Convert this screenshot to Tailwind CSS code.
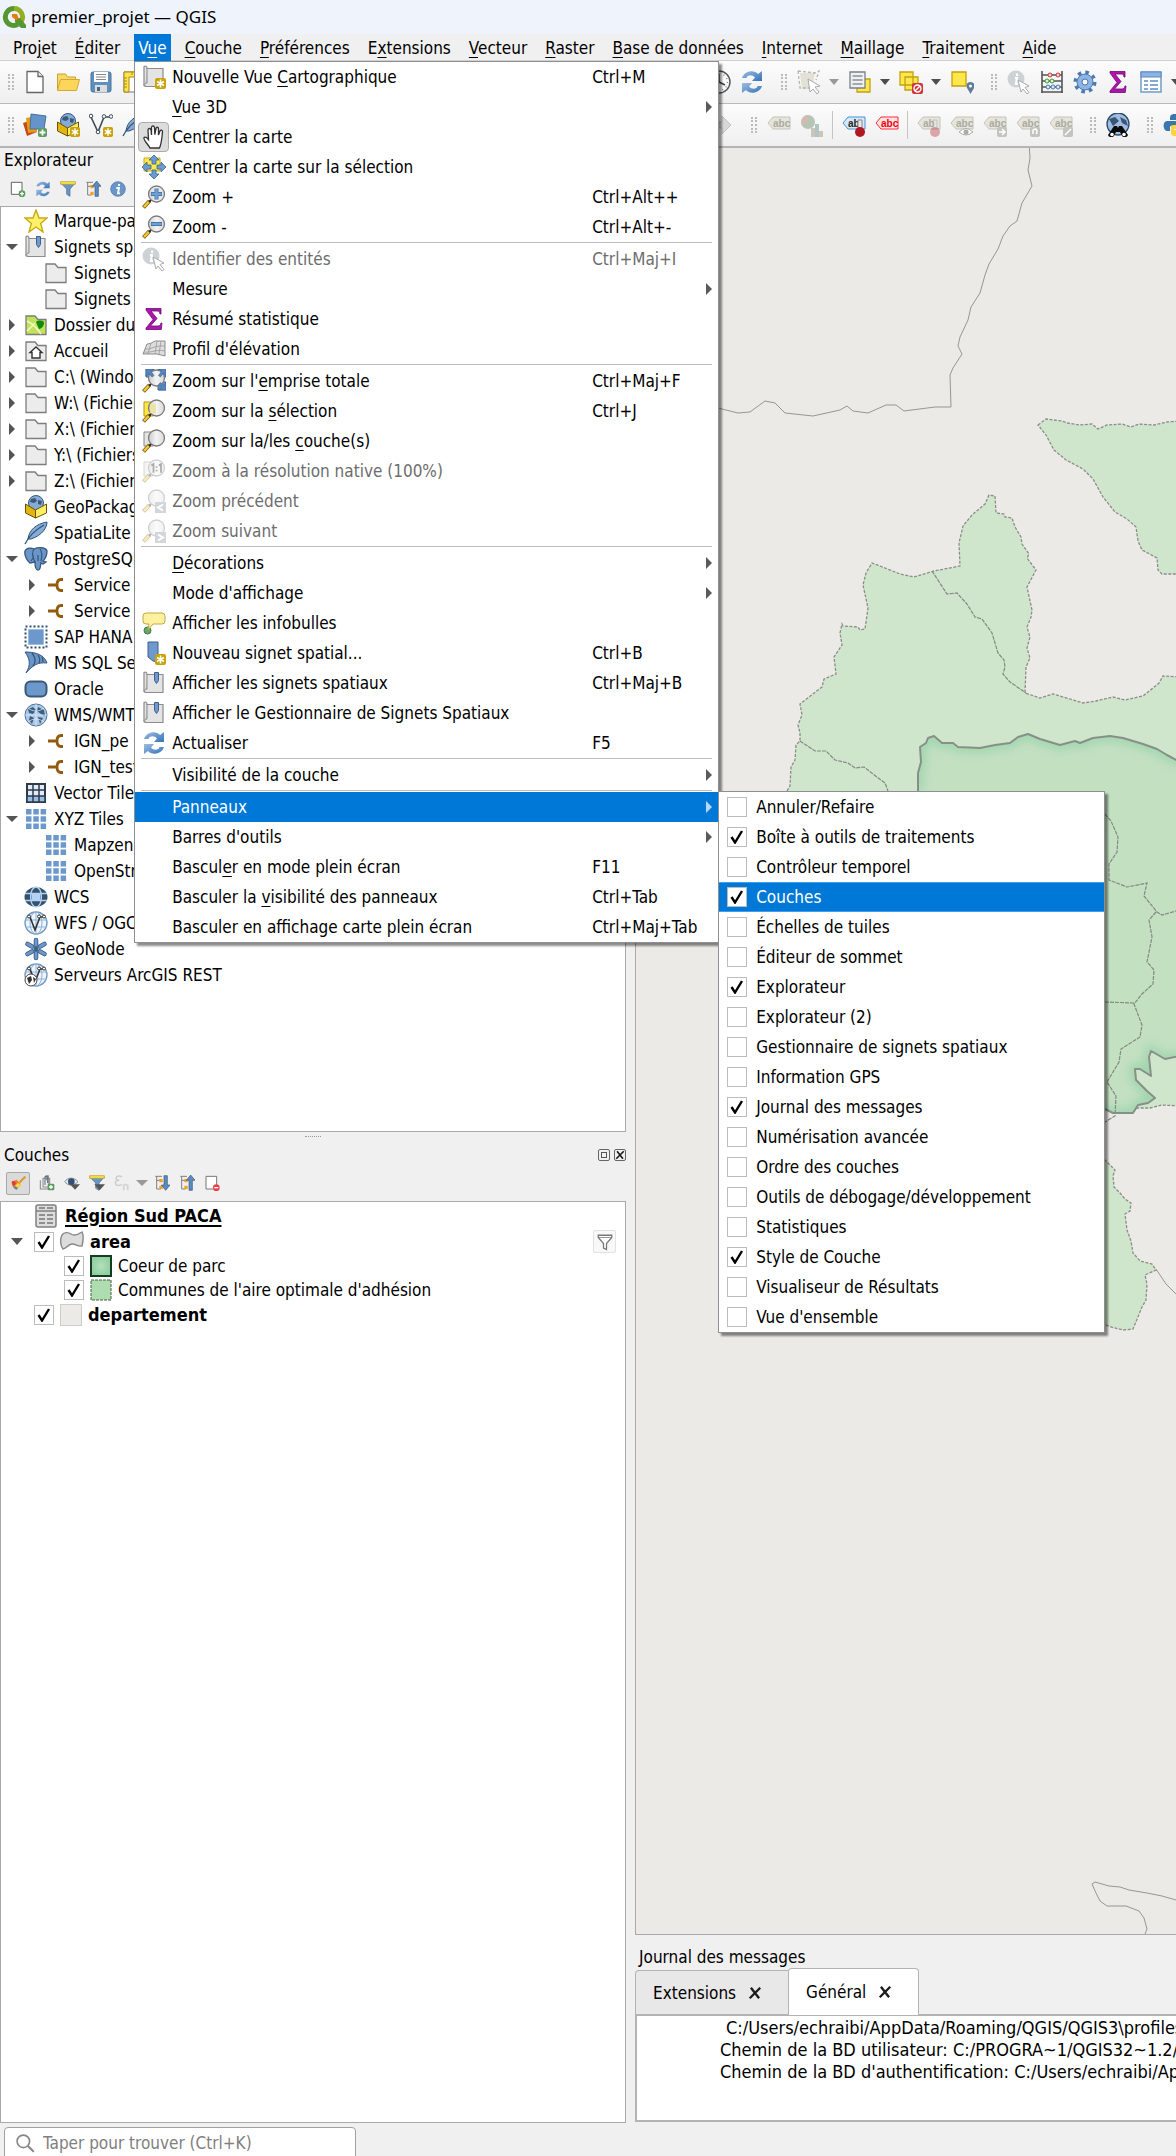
<!DOCTYPE html>
<html lang="fr">
<head>
<meta charset="utf-8">
<meta name="viewport" content="width=device-width, initial-scale=1">
<title>premier_projet — QGIS</title>
<script src="https://cdn.jsdelivr.net/npm/@tailwindcss/browser@4"></script>
</head>
<body class="flex min-h-screen flex-col overflow-x-hidden bg-[#f0f0f0] font-['DejaVu_Sans_Condensed','DejaVu_Sans',sans-serif] text-[17px] leading-[26px] text-black">

<svg class="absolute size-0" aria-hidden="true">
  <defs>
    <linearGradient id="lens" x1="0" y1="0" x2="1" y2="0"><stop offset="0" stop-color="#ccc"/><stop offset=".5" stop-color="#f4f4f4"/><stop offset="1" stop-color="#d8d8d8"/></linearGradient>
    <linearGradient id="blue" x1="0" y1="0" x2="1" y2="1"><stop offset="0" stop-color="#9dbde2"/><stop offset="1" stop-color="#3573b8"/></linearGradient>
    <symbol id="badge" viewBox="0 0 11 11"><rect width="11" height="11" rx="2" fill="#c8a30b"/><path d="M5.500 1.500v8M2 3.500l7 4M9 3.500l-7 4" stroke="#fff" stroke-width="1.600"/></symbol>
    <symbol id="lensbase" viewBox="0 0 24 24"><path d="M1.500 22.500l6-6.500" stroke="#7a5a10" stroke-width="4"/><path d="M2 22l5-5.500" stroke="#f0c838" stroke-width="2.600"/><path d="M7 17l3-3" stroke="#222" stroke-width="2"/><circle cx="14.500" cy="9" r="8" fill="url(#lens)" stroke="#7b7b7b" stroke-width="1.300"/></symbol>
  </defs>
  <symbol id="qgis" viewBox="0 0 24 24"><path d="M12 3.500a8.500 8.500 0 1 0 4 15.900" fill="none" stroke="#589632" stroke-width="5"/><path d="M12 3.500a8.500 8.500 0 0 1 7.200 13" fill="none" stroke="#93b023" stroke-width="5"/><path d="M13 13h5l6 7v3h-5l-6-6z" fill="#589632"/><path d="M10 9h5l2 5-3 1-4-3z" fill="#ee7913"/></symbol>
  <symbol id="doc" viewBox="0 0 24 24"><path d="M4 1.500h11l5 5v16H4z" fill="#fff" stroke="#666" stroke-width="1.300"/><path d="M15 1.500v5h5" fill="#eee" stroke="#666" stroke-width="1.300"/></symbol>
  <symbol id="open" viewBox="0 0 24 24"><path d="M1.500 20V4h8l2 3h8v4" fill="#f7d96a" stroke="#c9a227"/><path d="M1.500 20.500l3-11h19l-3 11z" fill="#fbd65a" stroke="#d2a92c"/></symbol>
  <symbol id="save" viewBox="0 0 24 24"><rect x="2" y="2" width="20" height="20" rx="2" fill="#5f8fc0" stroke="#4f7399"/><path d="M5 2h14v10H5z" fill="#fff"/><path d="M7 4.500h10M7 7h10M7 9.500h10" stroke="#888" stroke-width="1.200"/><path d="M6 15h12v7H6z" fill="#dcdcdc"/><path d="M8 17h3v4H8z" fill="#48688a"/></symbol>
  <symbol id="layout" viewBox="0 0 24 24"><path d="M2 2h20v20H2z" fill="#fff" stroke="#777"/><path d="M2 2h20v5H7v15H2z" fill="#ffe34d" stroke="#a98a12"/><path d="M5 8h-3M5 11H2M5 14H2M5 17H2M10 2v3M14 2v3" stroke="#a98a12"/></symbol>
  <symbol id="ds" viewBox="0 0 24 24"><path d="M0 10l9-3 5 12-10 4z" fill="#c4471c"/><path d="M3 5l11-2v16l-9 1z" fill="#e79a13"/><path d="M8 1l15 2-2 13H7z" fill="#6494c9" stroke="#4a7099"/><rect x="15" y="15" width="9" height="9" rx="2" fill="#5f9b62"/><path d="M19.500 16.500v6M16.500 19.500h6" stroke="#fff" stroke-width="1.800"/></symbol>
  <symbol id="gpkg" viewBox="0 0 24 24"><circle cx="12" cy="8" r="7.500" fill="#86abd5" stroke="#33587e"/><path d="M7 4l4-1 2 3-3 2-4-1zM14 5l4 1-1 4-3-1z" fill="#3b5878"/><path d="M1.500 9l10 6v8l-10-5z" fill="#e0b50e" stroke="#6d5300"/><path d="M22.500 9l-11 6v8l11-5z" fill="#ffee63" stroke="#6d5300"/></symbol>
  <symbol id="gpkgnew" viewBox="0 0 24 24"><use href="#gpkg"/><use href="#badge" x="14" y="14" width="10" height="10"/></symbol>
  <symbol id="vnew" viewBox="0 0 24 24"><path d="M2 4l7 15 6-15h7" fill="none" stroke="#3c4c58" stroke-width="1.600"/><g fill="#fff" stroke="#3c4c58"><circle cx="2" cy="3" r="1.800"/><circle cx="15" cy="3.500" r="1.800"/><circle cx="22" cy="3.500" r="1.800"/><circle cx="9" cy="19" r="1.800"/></g><use href="#badge" x="14" y="14" width="10" height="10"/></symbol>
  <symbol id="feather" viewBox="0 0 24 24"><path d="M4 18C5 9 12 3 23 1c0 5-4 13-16 17z" fill="#86acd6" stroke="#2f5479"/><path d="M1 23C5 15 11 9 20 4" fill="none" stroke="#2f5479" stroke-width="1.300"/></symbol>
  <symbol id="map" viewBox="0 0 24 24"><path d="M2 1.500c2-1 3 0 3 2h16v18H4c-2 0-2.500-1-2-3z" fill="#e4e4e4" stroke="#8c8c8c" stroke-width="1.200"/><path d="M5 3v15c-2 0-3 1-2 3" fill="#cfcfcf" stroke="#8c8c8c"/></symbol>
  <symbol id="mapnew" viewBox="0 0 24 24"><use href="#map"/><use href="#badge" x="13" y="13" width="11" height="11"/></symbol>
  <symbol id="book" viewBox="0 0 24 24"><use href="#map"/><path d="M12.500 1.500h4v8l-2 3-2-3z" fill="#6f98cc" stroke="#3d618c"/></symbol>
  <symbol id="hand" viewBox="0 0 24 24"><path d="M8 23C6 19 1 15 2 12.500c1-1 3 0 4.500 2L6 5c0-2 2.500-2 3 0l.5 5V2.500c0-2 2.700-2 3 0l.3 7L14 3.500c.5-2 2.500-1.500 2.500.5v6l1.500-4c.7-1.500 2.500-1 2.500.7-.5 6-1 12-3 16.300z" fill="#fff" stroke="#333" stroke-width="1.300"/></symbol>
  <symbol id="pansel" viewBox="0 0 24 24"><path d="M2 3h16v13H2z" fill="#fce94a" stroke="#c9a80c"/><path d="M12 0l5 5h-3v4h-4V5H7zM12 24l5-5h-3v-4h-4v4H7zM0 12l5-5v3h4v4H5v3zM24 12l-5-5v3h-4v4h4v3z" fill="#6c9ccf" stroke="#3b6493" stroke-width=".8"/></symbol>
  <symbol id="zin" viewBox="0 0 24 24"><use href="#lensbase"/><path d="M14.500 3.500v11M9 9h11" stroke="#3e6ca0" stroke-width="4"/><path d="M14.500 4v10M9.500 9h10" stroke="#6f9fd4" stroke-width="2.600"/></symbol>
  <symbol id="zout" viewBox="0 0 24 24"><use href="#lensbase"/><path d="M9 9h11" stroke="#3e6ca0" stroke-width="4"/><path d="M9.500 9h10" stroke="#6f9fd4" stroke-width="2.400"/></symbol>
  <symbol id="identify" viewBox="0 0 24 24"><circle cx="9" cy="9" r="8.500" fill="#cdd2d6"/><path d="M10 3.500v2.500M8 8h2l-1 6h2" stroke="#fff" stroke-width="2.200" fill="none"/><path d="M11 10l11 6-4 1.500 4 5-2 1.500-4-5-2 3z" fill="#fff" stroke="#aaa"/></symbol>
  <symbol id="sigma" viewBox="0 0 24 24"><path d="M4 1.500h15v5.500h-1c-.5-2.500-1-3-3-3H9l6 7.500L8.500 19H16c2 0 2.500-1 3-3h1l-.7 6.500H4V21l7-8.500L4 3z" fill="#b312b3" stroke="#6b0d6b" stroke-width=".8"/></symbol>
  <symbol id="profile" viewBox="0 0 24 24"><path d="M1 17L5 7c5 0 7-4 11-3h7v15l-8-2z" fill="#ddd" stroke="#8b8b8b"/><path d="M3 12c6 1 9-4 20-3M2 15c8 1 12-3 21-1M9 6l-3 11M15 4l-2 13M19 4l-2 13" fill="none" stroke="#999" stroke-width=".8"/></symbol>
  <symbol id="zfull" viewBox="0 0 24 24"><path d="M4 0h8v8H4zM16 0h8v8h-8zM16 13h8v8h-8z" fill="#5f8fc2" stroke="#456b92"/><use href="#lensbase"/><path d="M4 0h7L9 2.500l3 4-2 1.500-3.500-4L4 7zM24 0v7l-2.500-3-3 4-2-1.500 3-4L17 0zM24 21v-7l-2.500 3-3-3.500-2 2 3 3-2.500 2.500z" fill="#5487bf" stroke="#3b6493" stroke-width=".6"/></symbol>
  <symbol id="zsel" viewBox="0 0 24 24"><path d="M2 3h9v14H2z" fill="#fce648" stroke="#b3960c"/><use href="#lensbase"/><path d="M8 5h6v9H8z" fill="#ece3a4"/></symbol>
  <symbol id="zlayer" viewBox="0 0 24 24"><path d="M2 3h9v14H2z" fill="#e4e4e4" stroke="#888"/><use href="#lensbase"/></symbol>
  <symbol id="znative" viewBox="0 0 24 24"><g opacity=".35"><use href="#zlayer"/></g><path d="M10 6l1.500-1v8M14.500 8h.1M14.500 11.500h.1M17.500 6L19 5v8" stroke="#aaa" stroke-width="1.700" fill="none" stroke-linecap="square"/></symbol>
  <symbol id="zprev" viewBox="0 0 24 24"><g opacity=".35"><use href="#lensbase"/></g><rect x="13" y="13" width="11" height="11" fill="#d3d6d9"/><path d="M21 15.500l-5 3 5 3" fill="none" stroke="#fff" stroke-width="2"/></symbol>
  <symbol id="znext" viewBox="0 0 24 24"><g opacity=".35"><use href="#lensbase"/></g><rect x="13" y="13" width="11" height="11" fill="#d3d6d9"/><path d="M16 15.500l5 3-5 3" fill="none" stroke="#fff" stroke-width="2"/></symbol>
  <symbol id="tip" viewBox="0 0 24 24"><circle cx="5.500" cy="19.500" r="3.500" fill="#67a66c" stroke="#3f7a48"/><path d="M4 2h16q3 0 3 3v5q0 3-3 3h-9l-5 6 1-6H4q-3 0-3-3V5q0-3 3-3z" fill="#fdf1a0" stroke="#c1a842"/></symbol>
  <symbol id="bmnew" viewBox="0 0 24 24"><path d="M6 1h10v20l-5-1-5-4z" fill="#6f98cc" stroke="#3d618c"/><use href="#badge" x="13" y="13" width="11" height="11"/></symbol>
  <symbol id="refresh" viewBox="0 0 24 24"><path d="M2 8c2-7 12-9 16-4l4-3v10H12l3-3.500C12 4 7 5 6.500 8z" fill="url(#blue)"/><path d="M22 16c-2 7-12 9-16 4l-4 3V13h10l-3 3.500c3 3.500 8 2.500 8.500-.5z" fill="url(#blue)"/></symbol>
  <symbol id="star" viewBox="0 0 24 24"><path d="M12 1l3 8h8l-6.300 5.500L19 23l-7-5-7 5 2.300-8.500L1 9h8z" fill="#fdf06b" stroke="#c9ac12" stroke-width="1.400"/></symbol>
  <symbol id="folder" viewBox="0 0 24 24"><path d="M2 3h9l3 3.500h8v15H2z" fill="#ececec" stroke="#7d7d7d" stroke-width="1.300"/></symbol>
  <symbol id="foldermap" viewBox="0 0 24 24"><path d="M2 3h9l3 3.500h8v15H2z" fill="#c1e25b" stroke="#7d7d7d" stroke-width="1.300"/><path d="M3 8c6 3 10 7 14 13M3 18l8-8" stroke="#f2f7c8" stroke-width="1.500" fill="none"/><path d="M12 9c2-2 8-2 8 1s-3 6-5 6z" fill="#12890f"/></symbol>
  <symbol id="home" viewBox="0 0 24 24"><use href="#folder"/><path d="M12 8l-6 5.500h2V19h8v-5.500h2z" fill="#fff" stroke="#333" stroke-width="1.400"/></symbol>
  <symbol id="pg" viewBox="0 0 24 24"><path d="M1 4c2-4 7-3 9-2 4-2 12-2 13 2 0 4-2 8-4 10l3 1-3 2-2-1c-1 3 0 7-3 7s-3-5-3-8l-5 1C3 14 0 8 1 4z" fill="#6b95c6" stroke="#35587c" stroke-width="1.300"/><path d="M10 2C7 6 9 11 11 15M16 2c3 4 2 8 1 12M7 14l2-3M14 8v6" fill="none" stroke="#35587c" stroke-width="1.200"/></symbol>
  <symbol id="service" viewBox="0 0 24 24"><path d="M4 12h9M19 6.500h-2q-4 0-4 5.500t4 5.500h2" fill="none" stroke="#935b0c" stroke-width="2.800"/></symbol>
  <symbol id="hana" viewBox="0 0 24 24"><path d="M4.500 4.500h15v15h-15z" fill="#6d98cb" stroke="#9fbce0"/><path d="M1.500 1.500h21v21h-21z" fill="none" stroke="#33506f" stroke-width="2" stroke-dasharray="2 2"/></symbol>
  <symbol id="mssql" viewBox="0 0 24 24"><path d="M1 1c9 0 19 2 22 11-9-1-14 2-21 10 5-8 4-14-1-21z" fill="#6b95c6" stroke="#35587c"/><path d="M8 2c4 5 4 9 1 13M14 4c2 3 2 6 1 8M18 6c1 2 1 4 1 5" fill="none" stroke="#35587c" stroke-width="1.300"/></symbol>
  <symbol id="oracle" viewBox="0 0 24 24"><rect x="1.500" y="4.500" width="21" height="15" rx="5" fill="#6d98cb" stroke="#3a5877" stroke-width="2"/></symbol>
  <symbol id="globe" viewBox="0 0 24 24"><circle cx="12" cy="12" r="11" fill="#a9c8ea" stroke="#4e7296"/><path d="M4 6l5-2 3 3-3 4-4-1zM14 4l6 3 1 6-4-2-4-3zM6 13l4 2-2 6-3-4zM14 14l5 1-3 6z" fill="#3f5d7d"/><path d="M1 12h22M12 1v22M4 5c5 4 11 4 16 0M4 19c5-4 11-4 16 0" fill="none" stroke="#e8f1fb" stroke-width=".7"/></symbol>
  <symbol id="vtiles" viewBox="0 0 24 24"><path d="M3 3h18v18H3z" fill="#e3ebf5" stroke="#2c3b4d" stroke-width="2"/><path d="M3 15h18v6H3z" fill="#9bbce4"/><path d="M9 2v20M15 2v20M2 9h20M2 15h20M3 21h18M3 3v18M21 3v18" stroke="#2c3b4d" stroke-width="1.500"/></symbol>
  <symbol id="xyz" viewBox="0 0 24 24"><path d="M2 2h5.500v5.500H2zM9.300 2h5.500v5.500H9.300zM16.600 2h5.500v5.500h-5.500zM2 9.300h5.500v5.500H2zM9.300 9.300h5.500v5.500H9.300zM16.600 9.300h5.500v5.500h-5.500zM2 16.600h5.500v5.500H2zM9.300 16.600h5.500v5.500H9.300zM16.600 16.600h5.500v5.500h-5.500z" fill="#6d98cb"/></symbol>
  <symbol id="wcs" viewBox="0 0 24 24"><ellipse cx="12" cy="12" rx="11.500" ry="10" fill="#34516f"/><path d="M7.500 9h9v6h-9z" fill="#b4d2f2"/><path d="M1 8.500h22M1 15.500h22" stroke="#b4d2f2" stroke-width="1.300"/><ellipse cx="12" cy="12" rx="5.500" ry="10" fill="none" stroke="#b4d2f2" stroke-width="1.300"/></symbol>
  <symbol id="wfs" viewBox="0 0 24 24"><circle cx="12" cy="12" r="11" fill="#eef5fc" stroke="#6f96c2" stroke-width="1.300"/><path d="M1 9h22M1 16h22M12 1v22" stroke="#8fb2d9"/><ellipse cx="12" cy="12" rx="6" ry="11" fill="none" stroke="#8fb2d9"/><path d="M6 6l5 13 5-13h3" fill="none" stroke="#333" stroke-width="1.600"/><g fill="#fff" stroke="#333"><circle cx="5" cy="5.500" r="1.500"/><circle cx="15" cy="5.500" r="1.500"/><circle cx="20" cy="5.500" r="1.500"/></g></symbol>
  <symbol id="geonode" viewBox="0 0 24 24"><g stroke="#3d6188" stroke-width="4.600" stroke-linecap="round"><path d="M12 3v5M12 16v5M3.500 7l4.500 2.500M16 14.500l4.500 2.500M20.500 7L16 9.500M8 14.500L3.500 17"/></g><g stroke="#6d98cb" stroke-width="2.800" stroke-linecap="round"><path d="M12 3v5M12 16v5M3.500 7l4.500 2.500M16 14.500l4.500 2.500M20.500 7L16 9.500M8 14.500L3.500 17"/></g><circle cx="12" cy="12" r="2.500" fill="#3d6188"/></symbol>
  <symbol id="arcgis" viewBox="0 0 24 24"><use href="#wfs"/><circle cx="7" cy="17" r="6" fill="#fff" stroke="#444"/><path d="M3 15l4-2 1 4-3 4zM9 14l3 2-2 4z" fill="#333"/></symbol>
  <symbol id="addlayer" viewBox="0 0 24 24"><path d="M2 2h16v18H2z" fill="#fff" stroke="#666" stroke-width="1.500"/><circle cx="18" cy="19" r="5" fill="#599a5c"/><path d="M18 16v6M15 19h6" stroke="#fff" stroke-width="2"/></symbol>
  <symbol id="removelayer" viewBox="0 0 24 24"><path d="M3 2h16v19H3z" fill="#fff" stroke="#777" stroke-width="1.500"/><circle cx="18.500" cy="19" r="5" fill="#e8434a"/><path d="M15.500 19h6" stroke="#fff" stroke-width="2"/></symbol>
  <symbol id="filter" viewBox="0 0 24 24"><path d="M1 3h22l-8 9v11l-5-3v-8z" fill="#6996ca" stroke="#44688f"/><path d="M1 1h22v4H1z" fill="#f8e24c" stroke="#b69b1c"/></symbol>
  <symbol id="filtertri" viewBox="0 0 24 24"><use href="#filter"/><path d="M8 14h16l-8 9z" fill="#555"/></symbol>
  <symbol id="up" viewBox="0 0 24 24"><path d="M2 2h10M4 2v19h6M4 8h6" fill="none" stroke="#777" stroke-width="1.400"/><path d="M8 6h5v5H8zM8 16h5v5H8z" fill="#f6a21c"/><path d="M17.500 0l6.500 8h-4v15h-5V8h-4z" fill="#5c8bc2" stroke="#34587f"/></symbol>
  <symbol id="down" viewBox="0 0 24 24"><path d="M2 2h10M4 2v19h6M4 8h6" fill="none" stroke="#777" stroke-width="1.400"/><path d="M8 6h5v5H8zM8 16h5v5H8z" fill="#f6a21c"/><path d="M17.500 23l6.500-8h-4V1h-5v14h-4z" fill="#5c8bc2" stroke="#34587f"/></symbol>
  <symbol id="info" viewBox="0 0 24 24"><circle cx="12" cy="12" r="11" fill="#6896cb" stroke="#46709f"/><path d="M13.500 4.500v3M9.500 10.500h4l-1.500 8h3" stroke="#fff" stroke-width="2.800" fill="none"/></symbol>
  <symbol id="brush" viewBox="0 0 24 24"><path d="M1 9l8-3 7 8-7 8c-4-1-8-6-8-13z" fill="#ee7b22"/><path d="M1 9l4-1.500L8 12l-4 5z" fill="#e0393e"/><path d="M9 22l7-8-4-4-7 7z" fill="#f9d648"/><path d="M4 18l5 4 2-3-4-3z" fill="#4f86c6"/><path d="M12 12L23 1" stroke="#e09a2c" stroke-width="3.500"/></symbol>
  <symbol id="addgroup" viewBox="0 0 24 24"><path d="M2 8v13h12M6 5v13h10V5zM11 8V1l3 0v12" fill="none" stroke="#8a8a8a" stroke-width="1.600"/><path d="M9 15V2h4v10" fill="none" stroke="#567" stroke-width="1.500"/><rect x="13" y="13" width="10" height="10" rx="2" fill="#5b9a63"/><path d="M18 15v6M15 18h6" stroke="#fff" stroke-width="2"/></symbol>
  <symbol id="eye" viewBox="0 0 24 24"><path d="M1 10c5-7 14-7 20 0-6 7-15 7-20 0z" fill="#dfe8f0" stroke="#8b9199" stroke-width="1.500"/><circle cx="11" cy="10" r="5" fill="#33506f"/><path d="M9 14h15l-7.500 8z" fill="#555"/></symbol>
  <symbol id="eps" viewBox="0 0 24 24"><path d="M12 3c-4-3-9-1-9 2 0 2 2 3 5 3-4 0-6 2-6 4 0 4 6 5 10 2" fill="none" stroke="#ccc" stroke-width="2"/><path d="M13 23v-8q4.500-4 9 0v8h-3v-7h-3v7z" fill="#d6d6d6"/></symbol>
  <symbol id="tbl" viewBox="0 0 24 24"><rect x="2" y="1" width="20" height="22" rx="2" fill="#ddd" stroke="#808080" stroke-width="1.500"/><path d="M2 7h20" stroke="#808080" stroke-width="1.500"/><path d="M5 4h6M13 4h6M5 11h6M13 11h6M5 15h6M13 15h6M5 19h6M13 19h6" stroke="#777" stroke-width="1.500"/></symbol>
  <symbol id="poly" viewBox="0 0 24 24"><path d="M2 5c2-3 6-3 9-1s8 0 11-2c2 4 1 10 0 14-4 1-6-2-10-2s-6 5-9 5c-3-4-3-10-1-14z" fill="#dcdcdc" stroke="#878787" stroke-width="1.400"/></symbol>
  <symbol id="funnel" viewBox="0 0 24 24"><path d="M3 3h18v3l-7 8v8l-4-2v-6L3 6z" fill="#fff" stroke="#777" stroke-width="1.700"/><path d="M3 6h18" stroke="#777"/></symbol>
  <symbol id="clock" viewBox="0 0 24 24"><circle cx="12" cy="12" r="11" fill="#fbfbfb" stroke="#555" stroke-width="1.400"/><path d="M12 4v8l6 3" fill="none" stroke="#444" stroke-width="1.500"/><circle cx="12" cy="12" r="8.500" fill="none" stroke="#6c94c3" stroke-width="1.500" stroke-dasharray="1 3.450"/></symbol>
  <symbol id="select" viewBox="0 0 24 24"><path d="M3 3h15l-3 16H5z" fill="#e3e2d6"/><path d="M1 1l17 2 4-2-3 9M1 1l2 17h9" fill="none" stroke="#b5b5ad" stroke-width="1.300" stroke-dasharray="3 2"/><path d="M11 9l12 7-5 1 4 5-2 2-4-5-3 3z" fill="#fff" stroke="#aaa"/></symbol>
  <symbol id="selform" viewBox="0 0 24 24"><path d="M9 9h13v13H9z" fill="#fde74c" stroke="#c1a20c" stroke-width="1.300"/><path d="M2 2h15v16H2z" fill="#eef0f2" stroke="#7a8088" stroke-width="1.300"/><path d="M4.500 6h10M4.500 10h10M4.500 14h10" stroke="#8b919a" stroke-width="1.700"/></symbol>
  <symbol id="desel" viewBox="0 0 24 24"><path d="M1 2h13v13H1zM6 7h13v13H6z" fill="#fde74c" stroke="#c1a20c" stroke-width="1.300"/><rect x="13" y="13" width="11" height="11" rx="2" fill="#d1343b"/><circle cx="18.500" cy="18.500" r="3.500" fill="none" stroke="#fff" stroke-width="1.400"/><path d="M16 21l5-5" stroke="#fff" stroke-width="1.400"/></symbol>
  <symbol id="selloc" viewBox="0 0 24 24"><path d="M2 2h14v14H2z" fill="#fde74c" stroke="#c1a20c" stroke-width="1.300"/><path d="M20.500 24c-2-4-4-6-4-8a4 4 0 0 1 8 0c0 2-2 4-4 8z" fill="#5d7c9c"/><circle cx="20.500" cy="16" r="1.500" fill="#fff"/></symbol>
  <symbol id="abacus" viewBox="0 0 24 24"><path d="M2 1v22M22 1v22M1 22h22M2 5h20M2 11h20M2 17h20" fill="none" stroke="#555" stroke-width="1.600"/><g fill="#f7d5d5" stroke="#c33"><circle cx="10" cy="5" r="2"/><circle cx="18" cy="5" r="2"/></g><g fill="#d9f2d9" stroke="#3a9a3a"><circle cx="7" cy="11" r="2"/><circle cx="12" cy="11" r="2"/></g><g fill="#dbe8f7" stroke="#4477b3"><circle cx="8" cy="17" r="2"/><circle cx="13" cy="17" r="2"/><circle cx="18" cy="17" r="2"/></g></symbol>
  <symbol id="gear" viewBox="0 0 24 24"><circle cx="12" cy="12" r="9.500" fill="none" stroke="#4d7bb0" stroke-width="4" stroke-dasharray="3.500 3.960"/><circle cx="12" cy="12" r="8" fill="#8db4e2" stroke="#4d7bb0"/><circle cx="12" cy="12" r="3" fill="#f6f6f6" stroke="#4d7bb0"/></symbol>
  <symbol id="attr" viewBox="0 0 24 24"><path d="M2 2h20v20H2z" fill="#fff" stroke="#6f9ccc" stroke-width="1.500"/><path d="M2 2h20v5H2z" fill="#8db4e2" stroke="#5d8cc0"/><path d="M5 11h4M11 11h8M5 15h4M11 15h8M5 19h4M11 19h8" stroke="#5d8cc0" stroke-width="1.400"/></symbol>
  <symbol id="arrowr" viewBox="0 0 24 24"><path d="M0 9h12V3l9 9-9 9v-6H0z" fill="#d5d8d5" stroke="#c0c4c0"/></symbol>
  <symbol id="tag" viewBox="0 0 24 24"><path d="M1 12l5-6h17v12H6z"/></symbol>
  <symbol id="pie" viewBox="0 0 24 24"><circle cx="8" cy="9" r="7" fill="#b7c5b5"/><path d="M8 9V2a7 7 0 0 0-6 10z" fill="#d6b9b5"/><path d="M11 15h4v9h-4z" fill="#c7c8ba"/><path d="M15 11h4v13h-4z" fill="#b3c4c4"/><path d="M19 18h4v6h-4z" fill="#cfc5b5"/></symbol>
  <symbol id="thermo" viewBox="0 0 24 24"><path d="M16 7h4v9h-4z" fill="#e9e9e9" stroke="#888"/><circle cx="18" cy="19" r="5" fill="#b01822"/></symbol>
  <symbol id="bino" viewBox="0 0 24 24"><circle cx="12" cy="11" r="11" fill="#9ebde0" stroke="#2e4a68" stroke-width="1.300"/><path d="M3 6l6-2 4 4-6 5zM14 4l6 3 2 6-6-3z" fill="#3a5674"/><path d="M8 13h3l1 2 1-2h3l6 9a3.500 3.500 0 0 1-6 1l-2-4h-4l-2 4a3.500 3.500 0 0 1-6-1z" fill="#0a0a0a"/><circle cx="6" cy="21.500" r="1.800" fill="#fff"/><circle cx="18" cy="21.500" r="1.800" fill="#fff"/></symbol>
  <symbol id="python" viewBox="0 0 24 24"><path d="M12 1c-5 0-5 2-5 6h6v1H4c-5 0-4 10 0 10h3v-4c0-3 10 1 10-4V5c0-3-2-4-5-4z" fill="#3a77ac"/><path d="M12 23c5 0 5-2 5-6h-6v-1h9c5 0 4-10 0-10h-2v4c0 4-10 0-10 4v5c0 3 1 4 4 4z" fill="#fbd43e"/></symbol>
  <symbol id="search" viewBox="0 0 24 24"><circle cx="10" cy="10" r="7.500" fill="none" stroke="#888" stroke-width="2"/><path d="M15.500 15.500l7 7" stroke="#888" stroke-width="2.500"/></symbol>
  <symbol id="cross" viewBox="0 0 24 24"><path d="M5 3l14 18M21 3L3 21" stroke="#1c1c1c" stroke-width="4"/></symbol>
</svg>

<header class="relative z-20">
  <div class="flex h-[34px] items-center gap-[5px] bg-[#eff3fb] pl-[2px] font-['Noto_Sans',sans-serif] text-[17px]">
    <svg class="size-6"><use href="#qgis"/></svg>
    <h1>premier_projet — QGIS</h1>
  </div>

  <nav class="h-[27px] border-b border-[#d0d0d0] bg-[#f0f0f0]" aria-label="Barre de menus">
    <ul id="menubar" class="flex gap-[10px] pl-[9px] whitespace-nowrap"></ul>
  </nav>

  <div id="bar1" class="flex h-[43px] items-center overflow-hidden border-b border-[#b9b9b9] bg-linear-to-b from-[#fcfcfc] to-[#efefef]" role="toolbar"></div>
  <div id="bar2" class="flex h-[44px] items-center overflow-hidden border-b-2 border-[#b5b5b5] bg-linear-to-b from-[#fcfcfc] to-[#efefef]" role="toolbar"></div>
</header>

<div class="flex flex-1">
  <div class="flex w-[54%] shrink-0 flex-col pr-[9px] pb-px">
    <section class="flex flex-[984_1_0] flex-col" aria-label="Explorateur">
      <h2 class="h-6 pl-1 leading-6">Explorateur</h2>
      <div id="exptools" class="flex h-[34px] items-center gap-[9px] pl-[10px]"></div>
      <ul id="tree" class="flex-1 border border-[#a9a9a9] bg-white pt-px whitespace-nowrap"></ul>
    </section>
    <div class="flex h-[9px] items-center justify-center"><div class="w-4 border-t border-dotted border-[#999]"></div></div>
    <section class="flex flex-[982_1_0] flex-col" aria-label="Couches">
      <div class="flex h-[28px] items-center gap-1 pl-1">
        <h2 class="flex-1">Couches</h2>
        <button class="grid size-3 place-items-center rounded-xs border border-[#666]" aria-label="Détacher"><span class="size-[6px] border border-[#555]"></span></button>
        <button class="grid size-3 place-items-center rounded-xs border border-[#666]" aria-label="Fermer"><svg class="size-[10px]"><use href="#cross"/></svg></button>
      </div>
      <div id="laytools" class="flex h-[32px] items-center pb-[4px] pl-[6px]"></div>
      <ul class="flex-1 border border-[#a9a9a9] bg-white whitespace-nowrap">
        <li class="flex h-[27px] items-center gap-[7px] pl-[33px] text-[18px] font-bold"><svg class="size-6"><use href="#tbl"/></svg><span class="underline decoration-2 underline-offset-3">Région Sud PACA</span></li>
        <li class="flex h-[25px] items-center pr-[9px] pl-[10px] text-[18px] font-bold">
          <svg class="mr-[11px] h-[7px] w-3"><path d="M0 0h12L6 7z" fill="#555"/></svg>
          <label class="flex flex-1 items-center gap-[6px]"><span data-check="1"></span><svg class="size-6"><use href="#poly"/></svg>area</label>
          <button class="grid size-[23px] place-items-center rounded-xs border border-[#e2e2e2] bg-[#f8f8f8]" aria-label="Filtre"><svg class="size-[18px]"><use href="#funnel"/></svg></button>
        </li>
        <li class="flex h-[24px] items-center pl-[63px]"><label class="flex items-center gap-[6px]"><span data-check="1"></span><svg class="size-[22px]"><defs><radialGradient id="core"><stop offset="0" stop-color="#b5e0bb"/><stop offset="1" stop-color="#8ed0a0"/></radialGradient></defs><rect x="1" y="1" width="20" height="20" fill="url(#core)" stroke="#163d24" stroke-width="2"/></svg>Coeur de parc</label></li>
        <li class="flex h-[24px] items-center pl-[63px]"><label class="flex items-center gap-[6px]"><span data-check="1"></span><svg class="size-[22px]"><rect x="1" y="1" width="20" height="20" fill="#aedeaf" stroke="#4a5a4a" stroke-dasharray="3 1"/></svg>Communes de l'aire optimale d'adhésion</label></li>
        <li class="flex h-[25px] items-center pl-[33px] text-[18px] font-bold"><label class="flex items-center gap-[6px]"><span data-check="1"></span><span class="size-[22px] border border-[#cfcdc8] bg-[#ebeae6]"></span>departement</label></li>
      </ul>
    </section>
  </div>

  <div class="flex min-w-0 flex-1 flex-col">
    <main class="relative flex-1 overflow-hidden border-b border-l border-[#a9a9a9] bg-[#ebeae6]" aria-label="Carte">
      <svg class="absolute inset-0 size-full" viewBox="636 148 540 1786" preserveAspectRatio="xMinYMin slice" fill="none">
        <defs>
          <clipPath id="coreclip"><path d="M918 791V773L921 762 920 747 926 743 928 738 934 736 942 743 953 743 958 747 980 748 995 745 1010 743 1018 737 1028 734 1040 739 1060 745 1075 741 1080 743 1093 738 1110 736 1123 738 1143 744 1157 749 1167 755 1180 762V1056L1165 1059 1151 1051 1149 1057 1151 1076 1140 1069 1135 1069 1136 1080 1147 1091 1155 1098 1148 1103 1138 1105 1133 1113 1113 1113 1105 1109 918 1060z"/></clipPath>
          <filter id="soft"><feGaussianBlur stdDeviation="5"/></filter>
        </defs>
        <g stroke="#979791" stroke-width="1">
          <path d="M718 408l20 5 12-1 15-11 10 2 10 10 28 3 27-6 7-4 6 5 15 2 18-8h10l8 6 31-4h16l-1-32 3-7 9-14-4-8 2-9 8-17 3-13 9-14 5-18 4-11 9-15 5-13 7-10 7-5 5-18 10-17-4-16 2-12-1-15-6-10 22 2 18 4 16-6 6-3"/>
          <path d="M1092 1884l3-2 14 4 11 1 9 3 18 3 15 3 14 4M1092 1884l4 9 4 8 7 5 19 0 13 5 5 7 3 11-2 5"/>
          <path d="M1156 1269l10 15 10 10"/>
        </g>
        <g fill="#cfe6cc" stroke="#8c8d88" stroke-width="1.300" stroke-dasharray="3 1.500">
          <path d="M1038 425l8-6 16 2 5 2 13 2 12-1 6 5 9-4 15-1 9 3 8-3 15 1 13-3 13-1v153l-18 0-4-4-1-12-15-8-4-9-2-14-9-8-12-7-12-15-10-18-10-10-17-9-12-10-8-15z"/>
          <path d="M787 791l3-5 1-19 4-7 1-15 4-4-0-8-2-8 4-10-2-11 22-17 2-8 12-5-2-17 8-12-2-12 2-9 1 2 15 1 2 3 5-1 3-21-5-23 3-12 6-10 8 3 20 8 14 3 20-6 26-5-1-23 4-17 9-11 13-11 4-9 6 1 1 17 8 1 1 3 7 1 3 9 6 10 1 7 7 10-2 4 9 12-9 17 5 23-1 7-4 10 3 10-3 11 3 10-4 9-1 26 15 5 13-4 17 5 13 4 13-2 17-4 12 3 18-4 10-8 6-5 4-7 18 1v429l-19-1-12 3-17-0-11-16-12 7z"/>
          <path d="M1100 1158l5 2 10 10-2 6 1 11 6 6 5 6 6 4-1 8-5 3 2 16 4 11 2 12 7 8 12 3 4 6-11 5 2 9-1 16-4 7-9 22-10 1-12-3-11-4z"/>
        </g>
        <g clip-path="url(#coreclip)">
          <path d="M900 720h290v410H900z" fill="#c3e0c1"/>
          <path d="M918 791V773L921 762 920 747 926 743 928 738 934 736 942 743 953 743 958 747 980 748 995 745 1010 743 1018 737 1028 734 1040 739 1060 745 1075 741 1080 743 1093 738 1110 736 1123 738 1143 744 1157 749 1167 755 1180 762M1180 1056L1165 1059 1151 1051 1149 1057 1151 1076 1140 1069 1135 1069 1136 1080 1147 1091 1155 1098 1148 1103 1138 1105 1133 1113 1113 1113 1105 1109" stroke="#9fd5ae" stroke-width="10" filter="url(#soft)"/>
        </g>
        <path d="M918 795V773L921 762 920 747 926 743 928 738 934 736 942 743 953 743 958 747 980 748 995 745 1010 743 1018 737 1028 734 1040 739 1060 745 1075 741 1080 743 1093 738 1110 736 1123 738 1143 744 1157 749 1167 755 1180 762M1180 1056L1165 1059 1151 1051 1149 1057 1151 1076 1140 1069 1135 1069 1136 1080 1147 1091 1155 1098 1148 1103 1138 1105 1133 1113 1113 1113 1105 1109" stroke="#879088" stroke-width="2" stroke-linejoin="round"/>
        <g stroke="#858983" stroke-width="1.200" stroke-dasharray="4 1">
          <path d="M932 571l15 23 10-1 10 11 8 13 7 2 10 14 6 20 6 7 1 7-2 7 7 8 16 11M800 741l15 10h11l9 9 13 3 7 5 9-1 13 10 8 6 3 8"/>
          <path d="M1105 814l6 7 7 16-1 15-8 12v16l18 7 20-4-3 13 13 16 5 3 14-4M1156 912l-7 8 3 17-5 25 7 8-1 14-11 10-8 10 8 21-2 12-19 12-2 13-12 20 9 14-1 20-10 6M1105 1002l29 1"/>
        </g>
      </svg>
    </main>
    <section class="pb-[2px]" aria-label="Journal des messages">
      <h2 class="h-[33px] pt-[9px] pl-1">Journal des messages</h2>
      <div class="relative z-10 -mb-px flex items-end" role="tablist">
        <div class="mb-px flex h-[44px] items-center rounded-tl-sm border border-r-0 border-b-0 border-[#b3b3b3] bg-[#e8e8e8] pr-[26px] pl-[17px]"><button role="tab">Extensions</button><button class="ml-3" aria-label="Fermer Extensions"><svg class="size-[14px]"><use href="#cross"/></svg></button></div>
        <div class="flex h-[47px] items-center rounded-t-sm border border-b-0 border-[#b3b3b3] bg-white pr-[26px] pl-[17px]"><button role="tab">Général</button><button class="ml-3" aria-label="Fermer Général"><svg class="size-[14px]"><use href="#cross"/></svg></button></div>
      </div>
      <div class="border-2 border-r-0 border-[#b3b3b3] bg-white">
        <div class="h-[104px] overflow-hidden pt-px pl-[83px] text-[18px] leading-[22px] whitespace-nowrap">
          <p class="pl-[6px]">C:/Users/echraibi/AppData/Roaming/QGIS/QGIS3\profiles</p>
          <p>Chemin de la BD utilisateur: C:/PROGRA~1/QGIS32~1.2/a</p>
          <p>Chemin de la BD d'authentification: C:/Users/echraibi/App</p>
        </div>
      </div>
    </section>
  </div>
</div>

<footer class="h-8 overflow-hidden pt-[3px] pl-1">
  <label class="flex h-9 w-[30%] items-start gap-2 rounded-sm border border-[#a0a0a0] bg-white pt-[2px] pl-[10px]"><svg class="mt-[3px] size-5 shrink-0"><use href="#search"/></svg><input class="min-w-0 flex-1 outline-none placeholder:text-[#808080]" placeholder="Taper pour trouver (Ctrl+K)" aria-label="Rechercher"></label>
</footer>

<script>
const icon = (name, cls = 'size-6') => `<svg class="${cls}"><use href="#${name}"/></svg>`;
// "&x" marks the letter that the keyboard mnemonic underlines
const mnemonic = t => t.replace(/&(.)/, '<u class="underline decoration-1 underline-offset-3">$1</u>');
const check = on => `<span class="grid place-items-center"><input type="checkbox" ${on ? 'checked' : ''} class="peer size-5 appearance-none border border-[#bcbcbc] bg-white [grid-area:1/1]"><svg class="pointer-events-none z-10 hidden size-[14px] [grid-area:1/1] peer-checked:block" viewBox="0 0 14 14"><path d="M1.500 7l3.500 5.500L12 1" fill="none" stroke="#000" stroke-width="2.400"/></svg></span>`;

const panels = [['Annuler/Refaire'],['Boîte à outils de traitements',1],['Contrôleur temporel'],['Couches',1],['Échelles de tuiles'],['Éditeur de sommet'],['Explorateur',1],['Explorateur (2)'],['Gestionnaire de signets spatiaux'],['Information GPS'],['Journal des messages',1],['Numérisation avancée'],['Ordre des couches'],['Outils de débogage/développement'],['Statistiques'],['Style de Couche',1],['Visualiseur de Résultats'],["Vue d'ensemble"]];
const submenu = `<ul class="absolute -top-px left-full w-[387px] border border-[#8f8f8f] bg-white text-black shadow-[3px_3px_2px_rgba(0,0,0,0.45)]">` + panels.map(([t, on]) =>
  `<li class="${t === 'Couches' ? 'border-y border-[#3ba0f2] bg-[#0078d7] text-white' : ''}"><label class="flex ${t === 'Couches' ? 'h-7' : 'h-[30px]'} items-center gap-[9px] pl-[8px]">${check(on)}${t}</label></li>`).join('') + '</ul>';

// [label, icon, shortcut, flags]: d = disabled, m = has a submenu, o = opened, p = pressed; null = separator
const view = [
  ['Nouvelle Vue &Cartographique','mapnew','Ctrl+M'],['&Vue 3D','','','m'],['Centrer la carte','hand','','p'],['Centrer la carte sur la sélection','pansel'],['Zoom +','zin','Ctrl+Alt++'],['Zoom -','zout','Ctrl+Alt+-'],null,
  ['Identifier des entités','identify','Ctrl+Maj+I','d'],['Mesure','','','m'],['Résumé statistique','sigma'],["Profil d'élévation",'profile'],null,
  ["Zoom sur l'&emprise totale",'zfull','Ctrl+Maj+F'],['Zoom sur la &sélection','zsel','Ctrl+J'],['Zoom sur la/les &couche(s)','zlayer'],['Zoom à la résolution native (100%)','znative','','d'],['Zoom précédent','zprev','','d'],['Zoom suivant','znext','','d'],null,
  ['&Décorations','','','m'],["Mode d'affichage",'','','m'],['Afficher les infobulles','tip'],['Nouveau signet spatial...','bmnew','Ctrl+B'],['Afficher les signets spatiaux','book','Ctrl+Maj+B'],['Afficher le Gestionnaire de Signets Spatiaux','book'],['Actualiser','refresh','F5'],null,
  ['Visibilité de la couche','','','m'],null,
  ['Panneaux','','','mo'],["Barres d'outils",'','','m'],['Bascul&er en mode plein écran','','F11'],['Basculer la &visibilité des panneaux','','Ctrl+Tab'],['Basculer en affichage carte plein écran','','Ctrl+Maj+Tab']];
const dropdown = `<ul class="absolute top-[27px] left-0 w-[585px] border border-[#8f8f8f] bg-white text-black shadow-[3px_3px_2px_rgba(0,0,0,0.45)]">` + view.map(r => {
  if (!r) return '<li class="mx-[6px] h-[2px] border-t border-[#bdbdbd]"></li>';
  const [label, ic, key = '', f = ''] = r, open = f.includes('o');
  return `<li class="relative ${open ? 'bg-[#0078d7] text-white' : ''}"><button ${f.includes('d') ? 'disabled' : ''} class="flex h-[30px] w-full items-center text-left disabled:text-[#6d6d6d]">
    <span class="mr-[3px] ml-[3px] grid h-[30px] w-[31px] place-items-center ${f.includes('p') ? 'rounded-sm border border-[#ababab] bg-[#dcdcdc]' : ''}">${ic ? icon(ic) : ''}</span>
    <span class="flex-1">${mnemonic(label)}</span><span class="flex w-[126px] items-center pr-[6px]">${key}${f.includes('m') ? `<svg class="ml-auto h-3 w-[6px] ${open ? 'fill-[#b5d8f7]' : 'fill-[#5a5a5a]'}"><path d="M0 0l6 6-6 6z"/></svg>` : ''}</span></button>${open ? submenu : ''}</li>`;
}).join('') + '</ul>';

document.getElementById('menubar').innerHTML = ['Pro&jet','&Éditer','V&ue','&Couche','&Préférences','E&xtensions','&Vecteur','&Raster','&Base de données','&Internet','&Maillage','&Traitement','&Aide'].map(l =>
  `<li class="relative"><button class="h-[27px] px-1 ${l === 'V&ue' ? 'bg-[#0078d7] text-white' : ''}">${mnemonic(l)}</button>${l === 'V&ue' ? dropdown : ''}</li>`).join('');

const dots = `<i class="h-4 border-l-2 border-dotted border-[#bbb]"></i>`;
const grip = `<span class="flex w-6 shrink-0 justify-center gap-[2px] pl-2">${dots}${dots}</span>`;
const firstGrip = `<span class="flex w-[18px] shrink-0 justify-center gap-[2px] pl-1">${dots}${dots}</span>`;
const tool = n => `<button class="grid w-[33px] shrink-0 place-items-center">${icon(n)}</button>`;
const tri = (c = 'fill-[#4d4d4d]') => `<button class="grid w-[18px] shrink-0 place-items-center ${c}"><svg class="h-[6px] w-[10px]"><path d="M0 0h10L5 6z"/></svg></button>`;
const rule = `<span class="mx-[4px] h-7 shrink-0 border-l border-[#c4c4c4]"></span>`;
const tagIcon = (text, color, extra = '') => `<button class="grid w-[33px] shrink-0 place-items-center"><svg class="size-6"><use href="#tag" class="${color}" y="-2"/><text x="6" y="14" class="font-['Liberation_Sans',sans-serif] text-[10px] font-bold ${color.includes('red') ? 'fill-red-600' : color.includes('4a90') ? 'fill-[#222]' : 'fill-[#aaaaa0]'}">${text}</text>${extra}</svg></button>`;
const off = 'fill-[#e5e5dc] stroke-[#c4c4ba]';
const square = d => `<rect x="14" y="14" width="10" height="10" rx="2" fill="#c3c4bf"/><path d="${d}" stroke="#fff" stroke-width="1.500" fill="none"/>`;
document.getElementById('bar1').innerHTML = `<div class="flex w-[702px] shrink-0 items-center">${firstGrip}${tool('doc')}${tool('open')}${tool('save')}${tool('layout')}</div>` +
  tool('clock') + tool('refresh') + grip + tool('select') + tri('fill-[#999]') + tool('selform') + tri() + tool('desel') + tri() + tool('selloc') + grip + tool('identify') + tool('abacus') + tool('gear') + tool('sigma') + tool('attr') + tri();
document.getElementById('bar2').innerHTML = `<div class="flex w-[705px] shrink-0 items-center">${firstGrip}${tool('ds')}${tool('gpkgnew')}${tool('vnew')}${tool('feather')}</div>` +
  tool('arrowr') + grip + tagIcon('abc', off) + tool('pie') + rule + tagIcon('ab', 'fill-[#d6e8fb] stroke-[#4a90d9]', '<use href="#thermo"/>') + tagIcon('abc', 'fill-[#ffe3e3] stroke-red-500') + rule +
  tagIcon('ab', off, '<g opacity=".35"><use href="#thermo"/></g>') + tagIcon('abc', off, '<path d="M9 19q7-7 14 0-7 6-14 0z" fill="#fff" stroke="#aaa"/><circle cx="16" cy="19" r="2.500" fill="#aaa"/>') + tagIcon('abc', off, square('M16 19h6M19 16l3 3-3 3')) + tagIcon('abc', off, square('M17 21v-3q0-2 3-2 2 3 0 5')) + tagIcon('abc', off, square('M16 22l6-6')) + grip + tool('bino') + grip + tool('python');
document.getElementById('exptools').innerHTML = ['addlayer','refresh','filter','up','info'].map(n => `<button>${icon(n, 'size-4')}</button>`).join('');
document.getElementById('laytools').innerHTML = `<button class="mr-[4px] grid h-[23px] w-6 place-items-center rounded-xs border border-[#a8a8a8] bg-[#dadada]">${icon('brush', 'size-[15px]')}</button>` +
  ['addgroup','eye','filtertri','eps'].map(n => `<button class="grid w-[25px] place-items-center">${icon(n, 'size-4')}</button>`).join('') + `<span class="grid w-[15px] place-items-center"><svg class="h-[6px] w-3"><path d="M0 0h12L6 6z" fill="#999"/></svg></span>` +
  ['down','up','removelayer'].map(n => `<button class="grid w-[25px] place-items-center">${icon(n, 'size-4')}</button>`).join('');

// [label, icon, level, arrow]: arrow d = expanded, r = collapsed
document.getElementById('tree').innerHTML = [['Marque-pages','star',0],['Signets spatiaux','book',0,'d'],['Signets projet','folder',1],['Signets utilisateur','folder',1],['Dossier du projet','foldermap',0,'r'],['Accueil','home',0,'r'],['C:\\ (Windows)','folder',0,'r'],['W:\\ (Fichiers)','folder',0,'r'],['X:\\ (Fichiers)','folder',0,'r'],['Y:\\ (Fichiers)','folder',0,'r'],['Z:\\ (Fichiers)','folder',0,'r'],['GeoPackage','gpkg',0],['SpatiaLite','feather',0],['PostgreSQL','pg',0,'d'],['Service 1','service',1,'r'],['Service 2','service',1,'r'],['SAP HANA','hana',0],['MS SQL Server','mssql',0],['Oracle','oracle',0],['WMS/WMTS','globe',0,'d'],['IGN_pe','service',1,'r'],['IGN_test','service',1,'r'],['Vector Tiles','vtiles',0],['XYZ Tiles','xyz',0,'d'],['Mapzen','xyz',1],['OpenStreetMap','xyz',1],['WCS','wcs',0],['WFS / OGC','wfs',0],['GeoNode','geonode',0],['Serveurs ArcGIS REST','arcgis',0]].map(([t, ic, lvl, a]) =>
  `<li class="flex h-[26px] items-center ${lvl ? 'pl-5' : ''}"><span class="grid w-[23px] place-items-center pr-[2px]">${a === 'd' ? '<svg class="h-[6px] w-3"><path d="M0 0h12L6 6z" fill="#555"/></svg>' : a ? '<svg class="h-3 w-[6px]"><path d="M0 0l6 6-6 6z" fill="#555"/></svg>' : ''}</span>${icon(ic)}<span class="pl-[6px]">${t}</span></li>`).join('');
document.querySelectorAll('[data-check]').forEach(e => e.outerHTML = check(true));
</script>
</body>
</html>
